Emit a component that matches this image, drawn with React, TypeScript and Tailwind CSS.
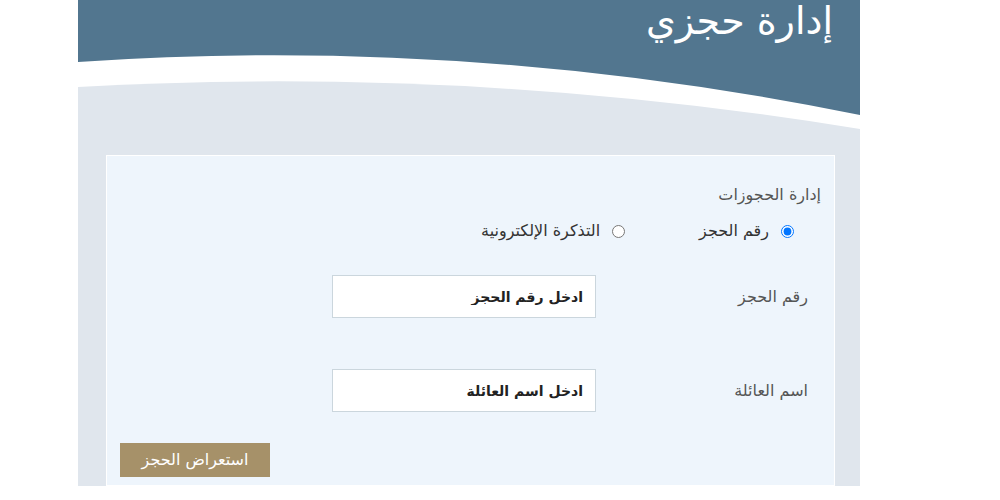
import React from "react";

export default function App() {
  const font = { fontFamily: '"DejaVu Sans", "Liberation Sans", sans-serif' };
  return (
    <div className="w-[1000px] h-[500px] bg-white overflow-hidden" style={font}>
      <div className="ml-[78px] w-[782px] flex flex-col">
        {/* header */}
        <div className="h-[55px] bg-[#52768f] flex justify-end items-start pr-[27px]">
          <h1 dir="rtl" className="text-white text-[38px] leading-[42px] font-normal">
            إدارة حجزي
          </h1>
        </div>
        <svg width="782" height="80" viewBox="0 0 782 80" className="block">
          <rect x="0" y="0" width="782" height="80" fill="#ffffff" />
          <path d="M0,0 L0,7 Q388,-20 782,60 L782,0 Z" fill="#52768f" />
          <path d="M0,32 Q391,10 782,74 L782,80 L0,80 Z" fill="#e0e6ed" />
        </svg>
        {/* grey body */}
        <div className="bg-[#e0e6ed] pt-[20px] pl-[28px] pr-[25px] h-[351px]">
          <div dir="rtl" className="h-full bg-[#eef5fc] border border-white flex flex-col">
            <div className="mt-[29px] pr-[13px] text-[16px] leading-[20px] text-[#555]">
              إدارة الحجوزات
            </div>
            <div className="mt-[16px] pr-[40px] flex items-center h-[20px] text-[16px] text-[#333]">
              <label className="flex items-center gap-[12px]">
                <input type="radio" name="t" defaultChecked className="w-[13px] h-[13px] m-0 accent-[#0075ff]" />
                <span>رقم الحجز</span>
              </label>
              <label className="flex items-center gap-[12px] mr-[74px]">
                <input type="radio" name="t" className="w-[13px] h-[13px] m-0" />
                <span>التذكرة الإلكترونية</span>
              </label>
            </div>
            <div className="mt-[34px] flex items-center pr-[26px]">
              <div className="w-[212px] text-[16px] text-[#555]">رقم الحجز</div>
              <input
                placeholder="ادخل رقم الحجز"
                className="w-[264px] h-[43px] bg-white border border-[#cbd6dd] px-[12px] text-[14px] font-bold outline-none placeholder:text-[#222]"
              />
            </div>
            <div className="mt-[51px] flex items-center pr-[26px]">
              <div className="w-[212px] text-[16px] text-[#555]">اسم العائلة</div>
              <input
                placeholder="ادخل اسم العائلة"
                className="w-[264px] h-[43px] bg-white border border-[#cbd6dd] px-[12px] text-[14px] font-bold outline-none placeholder:text-[#222]"
              />
            </div>
            <div className="mt-[31px] flex justify-end pl-[13px]">
              <button className="w-[150px] h-[34px] bg-[#a69169] text-white text-[16px]">
                استعراض الحجز
              </button>
            </div>
          </div>
        </div>
      </div>
    </div>
  );
}
